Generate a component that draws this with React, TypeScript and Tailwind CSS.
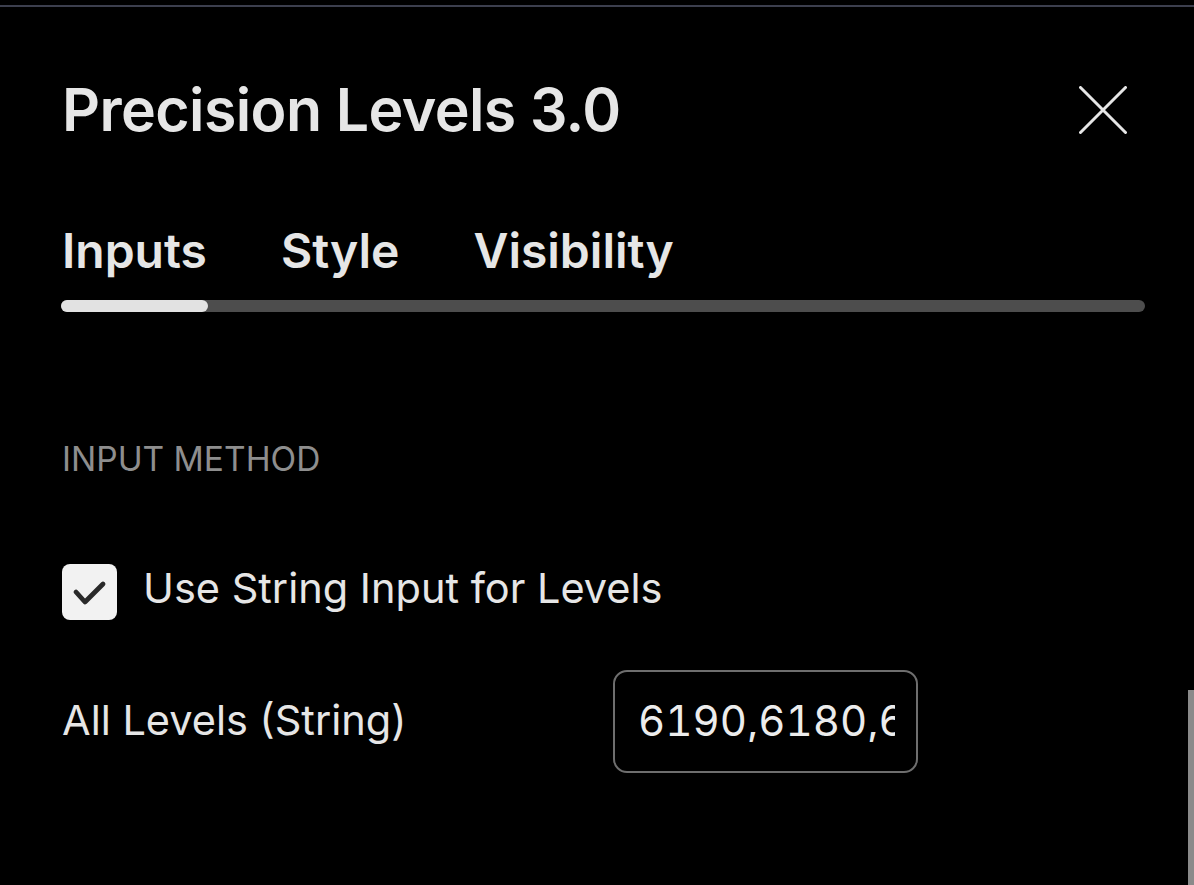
export default function App() {
  const tabs = ['Inputs', 'Style', 'Visibility']

  return (
    <div
      className="relative min-h-[885px] w-full overflow-hidden bg-black text-[#e6e6e6]"
      style={{ fontFamily: 'Inter, "Noto Sans", sans-serif' }}
    >
      {/* top divider */}
      <div className="h-[5px]" />
      <div className="h-[2px] bg-[#3c3f4e]" />

      {/* header */}
      <div className="mt-[73px] flex items-center justify-between pl-[62px] pr-[67px]">
        <h1 className="text-[59px] font-semibold leading-none tracking-[-0.01em]">Precision Levels 3.0</h1>
        <svg width="48" height="48" viewBox="0 0 48 48" className="text-[#e6e6e6]">
          <path d="M1.5 1.5L46.5 46.5M46.5 1.5L1.5 46.5" stroke="currentColor" strokeWidth="3" strokeLinecap="round" />
        </svg>
      </div>

      {/* tabs */}
      <div className="mt-[88px] flex gap-[74px] pl-[62px]">
        {tabs.map(t => (
          <span key={t} className="text-[48px] font-semibold leading-none">
            {t}
          </span>
        ))}
      </div>
      <div className="ml-[61px] mr-[49px] mt-[25px] h-[12px] rounded-full bg-[#4d4d4d]">
        <div className="h-full w-[147px] rounded-full bg-[#e2e2e2]" />
      </div>

      {/* section */}
      <div className="mt-[131px] pl-[62px] text-[33.5px] leading-none text-[#8e8e8e]">INPUT METHOD</div>

      <div className="mt-[87px] flex items-center pl-[62px]">
        <div className="flex h-[56px] w-[55px] items-center justify-center rounded-[8px] bg-[#f2f2f2]">
          <svg width="55" height="56" viewBox="0 0 55 56">
            <path d="M14 28L23 38L41 20" fill="none" stroke="#2a2a2a" strokeWidth="4.8" strokeLinecap="round" strokeLinejoin="round" />
          </svg>
        </div>
        <span className="mb-[5px] ml-[26px] text-[41.5px] leading-none">Use String Input for Levels</span>
      </div>

      <div className="mt-[50px] flex items-center pl-[62px]">
        <span className="w-[551px] text-[41.5px] leading-none">All Levels (String)</span>
        <div className="flex h-[103px] w-[305px] items-center rounded-[14px] border-2 border-[#6e6e6e] pl-[23px] pr-[21px]">
          <div className="overflow-hidden whitespace-nowrap text-[42px] leading-none tabular-nums text-[#ececec]">
            6190,6180,6170
          </div>
        </div>
      </div>

      {/* scrollbar */}
      <div className="absolute bottom-0 right-0 top-[690px] w-[6px] bg-[#8a8a8a]" />
    </div>
  )
}
